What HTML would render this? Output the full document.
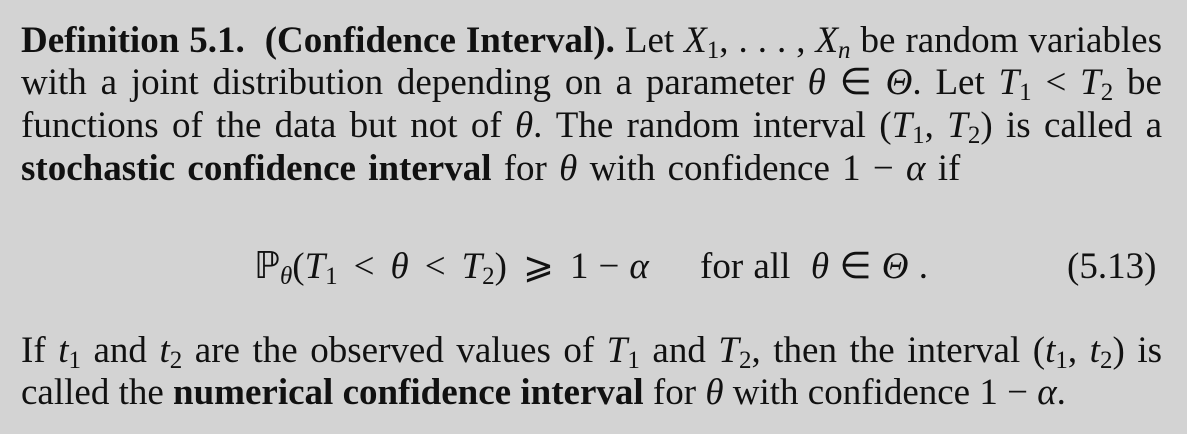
<!DOCTYPE html>
<html><head><meta charset="utf-8"><style>
body{margin:0;width:1187px;height:434px;background:#d3d3d3;overflow:hidden;position:relative;font-family:"Liberation Serif",serif;color:#111;}
.l{position:absolute;left:21px;width:1141px;font-size:37px;line-height:43px;white-space:nowrap;text-align:justify;text-align-last:justify;}
i{font-style:italic}
sub{font-size:25px;vertical-align:-6px;line-height:0}
b{font-weight:bold}
.e{position:absolute;font-size:37px;line-height:43px;white-space:nowrap;top:245px}
.o{display:inline-block;margin:0 16px}
</style></head><body>
<div class="l" style="top:19px"><b>Definition 5.1.&nbsp; (Confidence Interval).</b> Let <i>X</i><sub>1</sub>, . . . , <i>X<sub>n</sub></i> be random variables</div>
<div class="l" style="top:61px">with a joint distribution depending on a parameter <i>θ</i> ∈ <i>Θ</i>. Let <i>T</i><sub>1</sub> &lt; <i>T</i><sub>2</sub> be</div>
<div class="l" style="top:104px">functions of the data but not of <i>θ</i>. The random interval (<i>T</i><sub>1</sub>, <i>T</i><sub>2</sub>) is called a</div>
<div class="l" style="top:147px;width:auto;text-align-last:auto;word-spacing:3px"><b>stochastic confidence interval</b> for <i>θ</i> with confidence 1 − <i>α</i> if</div>
<div class="e" style="left:254px">ℙ<sub><i>θ</i></sub>(<i>T</i><sub>1</sub><span class="o">&lt;</span><i>θ</i><span class="o">&lt;</span><i>T</i><sub>2</sub>)<span class="o">⩾</span>1<span class="o" style="margin:0 10px">−</span><i>α</i></div>
<div class="e" style="left:700px;word-spacing:1px">for all&nbsp; <i>θ</i> ∈ <i>Θ</i> .</div>
<div class="e" style="left:1067px">(5.13)</div>
<div class="l" style="top:329px">If <i>t</i><sub>1</sub> and <i>t</i><sub>2</sub> are the observed values of <i>T</i><sub>1</sub> and <i>T</i><sub>2</sub>, then the interval (<i>t</i><sub>1</sub>, <i>t</i><sub>2</sub>) is</div>
<div class="l" style="top:371px;width:auto;text-align-last:auto">called the <b>numerical confidence interval</b> for <i>θ</i> with confidence 1 − <i>α</i>.</div>
</body></html>
